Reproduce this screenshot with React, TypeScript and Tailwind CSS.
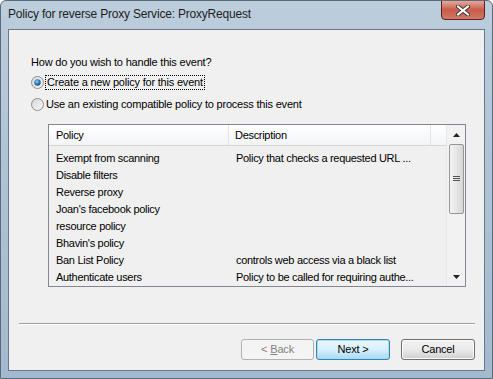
import React from "react";

const rows: [string, string][] = [
  ["Exempt from scanning", "Policy that checks a requested URL ..."],
  ["Disable filters", ""],
  ["Reverse proxy", ""],
  ["Joan's facebook policy", ""],
  ["resource policy", ""],
  ["Bhavin's policy", ""],
  ["Ban List Policy", "controls web access via a black list"],
  ["Authenticate users", "Policy to be called for requiring authe..."],
];

function Radio({ checked }: { checked: boolean }) {
  return (
    <svg width="13" height="13" viewBox="0 0 13 13" className="shrink-0">
      <defs>
        <linearGradient id={checked ? "rg1" : "rg0"} x1="0" y1="0" x2="1" y2="1">
          <stop offset="0" stopColor="#d8d8d8" />
          <stop offset="1" stopColor="#f7f7f7" />
        </linearGradient>
        <radialGradient id="dot" cx="0.4" cy="0.35" r="0.7">
          <stop offset="0" stopColor="#9fd2f5" />
          <stop offset="0.5" stopColor="#2f7fc4" />
          <stop offset="1" stopColor="#1b4f86" />
        </radialGradient>
      </defs>
      <circle cx="6.5" cy="6.5" r="6" fill={`url(#${checked ? "rg1" : "rg0"})`} stroke="#8e8f8f" strokeWidth="1" />
      {checked && <circle cx="6.5" cy="6.5" r="3.2" fill="url(#dot)" />}
    </svg>
  );
}

export default function App() {
  return (
    <div
      className="w-[493px] h-[379px] flex flex-col bg-gradient-to-b from-[#bccddc] via-[#aec2d5] to-[#a3b9cd] border border-[#5a6a7a] rounded-t-[6px] overflow-hidden"
      style={{ fontFamily: '"Liberation Sans", Arial, sans-serif' }}
    >
      {/* Title bar */}
      <div className="h-[28px] shrink-0 flex items-start relative">
        <div className="pl-[7px] pt-[6px] text-[12px] text-[#1e1e1e] leading-[14px] tracking-[-0.2px]">
          Policy for reverse Proxy Service: ProxyRequest
        </div>
        <div className="absolute right-[7px] top-[-1px] w-[44px] h-[20px] rounded-b-[4px] border border-[#5b2020] bg-gradient-to-b from-[#e3a89c] via-[#c85a48] to-[#d27a68] flex items-center justify-center">
          <svg width="14" height="11" viewBox="0 0 14 11">
            <path d="M2 1.5 L12 9.5 M12 1.5 L2 9.5" stroke="#3a3a3a" strokeWidth="4" strokeLinecap="square" />
            <path d="M2 1.5 L12 9.5 M12 1.5 L2 9.5" stroke="#ffffff" strokeWidth="2" strokeLinecap="square" />
          </svg>
        </div>
      </div>

      {/* Client area */}
      <div className="mx-[7px] mb-[7px] flex-1 border border-[#68788a] bg-[#f0f0f0] flex flex-col text-[11px] text-black leading-[13px] tracking-[-0.2px]">
        <div className="pl-[22px] pt-[26px]">How do you wish to handle this event?</div>

        <div className="pl-[22px] mt-[6px] flex items-center gap-[1px]">
          <Radio checked />
          <span className="px-[1px] py-[0px] border border-dotted border-black">Create a new policy for this event</span>
        </div>
        <div className="pl-[22px] mt-[8px] flex items-center gap-[2px]">
          <Radio checked={false} />
          <span>Use an existing compatible policy to process this event</span>
        </div>

        {/* List */}
        <div className="ml-[39px] mt-[13px] w-[418px] h-[163px] border border-[#828790] bg-[#f0f0f0] flex tracking-[-0.3px]">
          <div className="flex-1 flex flex-col">
            <div className="h-[24px] flex bg-gradient-to-b from-[#ffffff] to-[#f3f4f6] border-b border-[#d5d5d5]">
              <div className="w-[180px] pl-[7px] flex items-center border-r border-[#e3e4e6]">Policy</div>
              <div className="w-[202px] pl-[6px] flex items-center border-r border-[#e3e4e6]">Description</div>
              <div className="flex-1" />
            </div>
            <div className="pt-[4px] flex flex-col">
              {rows.map(([p, d]) => (
                <div key={p} className="h-[17px] flex items-center">
                  <div className="w-[180px] pl-[7px]">{p}</div>
                  <div className="pl-[7px]">{d}</div>
                </div>
              ))}
            </div>
          </div>
          {/* Scrollbar */}
          <div className="w-[19px] bg-[#f2f2f2] border-l border-[#e8e8e8] flex flex-col items-center">
            <div className="h-[19px] w-full flex items-center justify-center">
              <svg width="7" height="4" viewBox="0 0 7 4"><path d="M3.5 0 L7 4 L0 4 Z" fill="#222" /></svg>
            </div>
            <div className="w-[15px] h-[70px] rounded-[2px] border border-[#979797] bg-gradient-to-r from-[#f3f3f3] via-[#e6e6e6] to-[#d6d6d6] flex items-center justify-center">
              <svg width="7" height="6" viewBox="0 0 7 6">
                <path d="M0 0.5 H7 M0 2.5 H7 M0 4.5 H7" stroke="#555" strokeWidth="1" />
              </svg>
            </div>
            <div className="flex-1" />
            <div className="h-[19px] w-full flex items-center justify-center">
              <svg width="7" height="4" viewBox="0 0 7 4"><path d="M0 0 L7 0 L3.5 4 Z" fill="#222" /></svg>
            </div>
          </div>
        </div>

        <div className="flex-1" />
        {/* Separator */}
        <div className="ml-[10px] w-[456px] h-[1px] bg-[#a0a0a0] border-b border-white box-content" />

        {/* Buttons */}
        <div className="flex pl-[232px] mt-[14px] mb-[10px]">
          <div className="w-[73px] h-[21px] rounded-[3px] border border-[#adb2b5] bg-[#f4f4f4] text-[#838383] flex items-center justify-center">
            &lt; <span className="underline ml-[3px]">B</span>ack
          </div>
          <div className="ml-[2px] w-[74px] h-[21px] rounded-[3px] border border-[#3c7fb1] bg-gradient-to-b from-[#eaf6fd] via-[#d9f0fc] to-[#a7d9f5] flex items-center justify-center shadow-[inset_0_0_0_1px_#9ee1f7]">
            Next &gt;
          </div>
          <div className="ml-[11px] w-[74px] h-[21px] rounded-[3px] border border-[#707070] bg-gradient-to-b from-[#f2f2f2] via-[#ebebeb] to-[#cfcfcf] flex items-center justify-center shadow-[inset_0_0_0_1px_#fbfbfb]">
            Cancel
          </div>
        </div>
      </div>
    </div>
  );
}
